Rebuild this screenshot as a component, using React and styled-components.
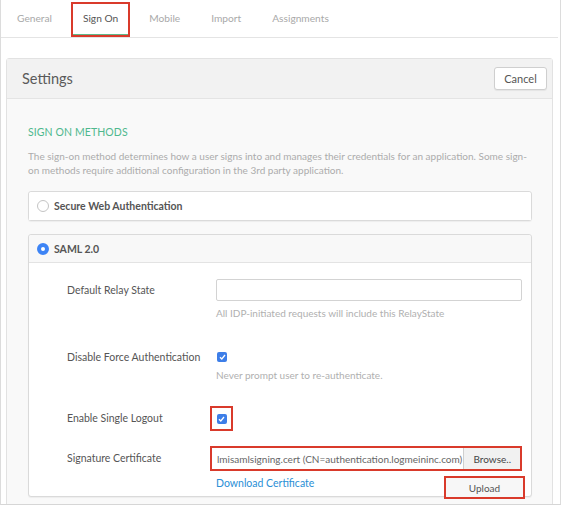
import React from "react";
import styled, { createGlobalStyle } from "styled-components";

//#region Styles
const GlobalStyle = createGlobalStyle`
  html, body {
    margin: 0;
    padding: 0;
    background: #ffffff;
  }
  body {
    font-family: Lato, "Liberation Sans", Arial, sans-serif;
    color: #555;
  }
`;

const Page = styled.div`
  width: 561px;
  height: 505px;
  box-sizing: border-box;
  border-left: 1px solid #dcdcdc;
  border-right: 1px solid #dcdcdc;
  border-bottom: 1px solid #d6d6d6;
  overflow: hidden;
  background: #fff;
`;

const TabBar = styled.nav`
  display: flex;
  gap: 7px;
  height: 37px;
  padding-left: 4px;
  border-bottom: 1px solid #e4e4e4;
  margin-right: 2px;
`;

const Tab = styled.div`
  position: relative;
  display: flex;
  align-items: center;
  padding: 0 10px 3px;
  margin-top: 2px;
  font-size: 10.2px;
  color: ${(p) => (p.$active ? "#555" : "#a9a9a9")};
  box-sizing: border-box;
  border: 2px solid ${(p) => (p.$active ? "#d93a2b" : "transparent")};
  height: 35px;
  &::after {
    content: "";
    display: ${(p) => (p.$active ? "block" : "none")};
    position: absolute;
    left: 0;
    right: 0;
    bottom: 0;
    height: 1px;
    background: #5fb88a;
  }
`;

const Panel = styled.section`
  margin: 20px 7px 0 5px;
  border: 1px solid #e2e2e2;
  border-radius: 3px;
  background: #f9f9f9;
  height: 460px;
`;

const PanelHeader = styled.header`
  display: flex;
  align-items: center;
  justify-content: space-between;
  height: 39px;
  padding: 0 5px 0 15px;
  background: #f2f2f2;
  border-bottom: 1px solid #e4e4e4;
`;

const PanelTitle = styled.h2`
  margin: 0;
  font-weight: 400;
  font-size: 14.5px;
  color: #5a5a5a;
`;

const Button = styled.button`
  font-family: inherit;
  font-size: 11px;
  color: #555;
  background: #fff;
  border: 1px solid #cfcfcf;
  border-radius: 3px;
  height: 23px;
  width: 53px;
  padding: 0;
  box-shadow: 0 1px 1px rgba(0, 0, 0, 0.06);
`;

const PanelBody = styled.div`
  padding: 27px 20px 0 21px;
`;

const SectionTitle = styled.h3`
  margin: 0;
  font-weight: 400;
  font-size: 10.5px;
  line-height: 13px;
  color: #4fb88e;
  text-transform: uppercase;
  letter-spacing: 0.1px;
`;

const Description = styled.p`
  margin: 10px 0 0;
  font-size: 10px;
  line-height: 14px;
  color: #acacac;
`;

const MethodBox = styled.div`
  margin-top: ${(p) => p.$top}px;
  border: 1px solid #dadada;
  border-radius: 3px;
  background: #fff;
  box-shadow: 0 1px 1px rgba(0, 0, 0, 0.05);
`;

const MethodHead = styled.div`
  display: flex;
  align-items: center;
  gap: 5px;
  height: ${(p) => (p.$open ? 27 : 28)}px;
  padding-left: 8px;
  border-radius: 3px 3px 0 0;
  background: ${(p) => (p.$open ? "#f8f8f8" : "#fff")};
  border-bottom: ${(p) => (p.$open ? "1px solid #e3e3e3" : "none")};
  font-size: 10.5px;
  font-weight: 700;
  color: #555;
`;

const Radio = styled.span`
  width: 12px;
  height: 12px;
  border-radius: 50%;
  box-sizing: border-box;
  border: ${(p) => (p.$checked ? "4px solid #3d84f5" : "1px solid #c4c4c4")};
  background: #fff;
`;

const MethodContent = styled.div`
  padding: 16px 9px 0 38px;
`;

const Row = styled.div`
  display: grid;
  grid-template-columns: 149px minmax(0, 1fr);
  align-items: start;
  margin-bottom: ${(p) => p.$mb || 0}px;
`;

const Label = styled.div`
  font-size: 10.5px;
  line-height: 13px;
  color: #555;
  padding-top: ${(p) => p.$pt || 0}px;
`;

const Field = styled.div`
  display: flex;
  flex-direction: column;
  min-width: 0;
`;

const TextInput = styled.input`
  box-sizing: border-box;
  height: 22px;
  border: 1px solid #d3d3d3;
  border-radius: 2px;
  background: #fff;
`;

const Help = styled.div`
  margin-top: ${(p) => p.$mt || 6}px;
  font-size: 10px;
  line-height: 13px;
  color: #b0b0b0;
`;

const CheckWrap = styled.div`
  display: flex;
  align-items: center;
  justify-content: center;
  box-sizing: border-box;
  width: ${(p) => (p.$highlight ? 23 : 12)}px;
  height: ${(p) => (p.$highlight ? 25 : 12)}px;
  margin-left: ${(p) => (p.$highlight ? -6 : 0)}px;
  border: ${(p) => (p.$highlight ? "2px solid #d93a2b" : "none")};
`;

const Check = styled.span`
  display: flex;
  align-items: center;
  justify-content: center;
  width: 10px;
  height: 10px;
  border-radius: 2px;
  background: #3d7ee8;
`;

const CertBox = styled.div`
  display: flex;
  box-sizing: border-box;
  height: 25px;
  margin-left: -6px;
  border: 2px solid #d93a2b;
`;

const CertName = styled.div`
  flex: 1;
  min-width: 0;
  display: flex;
  align-items: center;
  padding-left: 5px;
  font-size: 10px;
  color: #666;
  white-space: nowrap;
  overflow: hidden;
  background: #fff;
`;

const BrowseButton = styled.div`
  display: flex;
  align-items: center;
  flex: none;
  padding: 0 9px;
  font-size: 10px;
  color: #444;
  background: #f1f1f1;
  border-left: 1px solid #cfcfcf;
`;

const CertFooter = styled.div`
  display: flex;
  justify-content: space-between;
  align-items: flex-start;
  margin-top: 5px;
`;

const Link = styled.a`
  margin-top: 1px;
  font-size: 10.5px;
  color: #2a8fd6;
  text-decoration: none;
`;

const UploadButton = styled.div`
  position: relative;
  display: flex;
  align-items: center;
  justify-content: center;
  box-sizing: border-box;
  width: 81px;
  height: 23px;
  margin: 0 -3px -3px 0;
  border: 2px solid #d93a2b;
  font-size: 10px;
  color: #555;
  background: #f7f7f7;
`;
//#endregion Styles

const tabs = [
  { name: "General" },
  { name: "Sign On", active: true },
  { name: "Mobile" },
  { name: "Import" },
  { name: "Assignments" },
];

function Checkbox({ highlight }) {
  return (
    <CheckWrap $highlight={highlight}>
      <Check>
        <svg width="7" height="6" viewBox="0 0 7 6">
          <path d="M1 3.2 L2.8 5 L6 1" fill="none" stroke="#fff" strokeWidth="1.3" />
        </svg>
      </Check>
    </CheckWrap>
  );
}

export default function App() {
  return (
    <>
      <GlobalStyle />
      <Page>
        <TabBar>
          {tabs.map((t) => (
            <Tab key={t.name} $active={t.active}>
              {t.name}
            </Tab>
          ))}
        </TabBar>
        <Panel>
          <PanelHeader>
            <PanelTitle>Settings</PanelTitle>
            <Button>Cancel</Button>
          </PanelHeader>
          <PanelBody>
            <SectionTitle>Sign On Methods</SectionTitle>
            <Description>
              The sign-on method determines how a user signs into and manages their
              credentials for an application. Some sign-on methods require additional
              configuration in the 3rd party application.
            </Description>
            <MethodBox $top={14}>
              <MethodHead>
                <Radio />
                Secure Web Authentication
              </MethodHead>
            </MethodBox>
            <MethodBox $top={13}>
              <MethodHead $open>
                <Radio $checked />
                SAML 2.0
              </MethodHead>
              <MethodContent>
                <Row $mb={31}>
                  <Label $pt={5}>Default Relay State</Label>
                  <Field>
                    <TextInput />
                    <Help>All IDP-initiated requests will include this RelayState</Help>
                  </Field>
                </Row>
                <Row $mb={24}>
                  <Label>Disable Force Authentication</Label>
                  <Field>
                    <Checkbox />
                    <Help $mt={6}>Never prompt user to re-authenticate.</Help>
                  </Field>
                </Row>
                <Row $mb={15}>
                  <Label $pt={6}>Enable Single Logout</Label>
                  <Field>
                    <Checkbox highlight />
                  </Field>
                </Row>
                <Row>
                  <Label $pt={6}>Signature Certificate</Label>
                  <Field>
                    <CertBox>
                      <CertName>lmisamlsigning.cert (CN=authentication.logmeininc.com)</CertName>
                      <BrowseButton>Browse..</BrowseButton>
                    </CertBox>
                    <CertFooter>
                      <Link href="#">Download Certificate</Link>
                      <UploadButton>Upload</UploadButton>
                    </CertFooter>
                  </Field>
                </Row>
              </MethodContent>
            </MethodBox>
          </PanelBody>
        </Panel>
      </Page>
    </>
  );
}
